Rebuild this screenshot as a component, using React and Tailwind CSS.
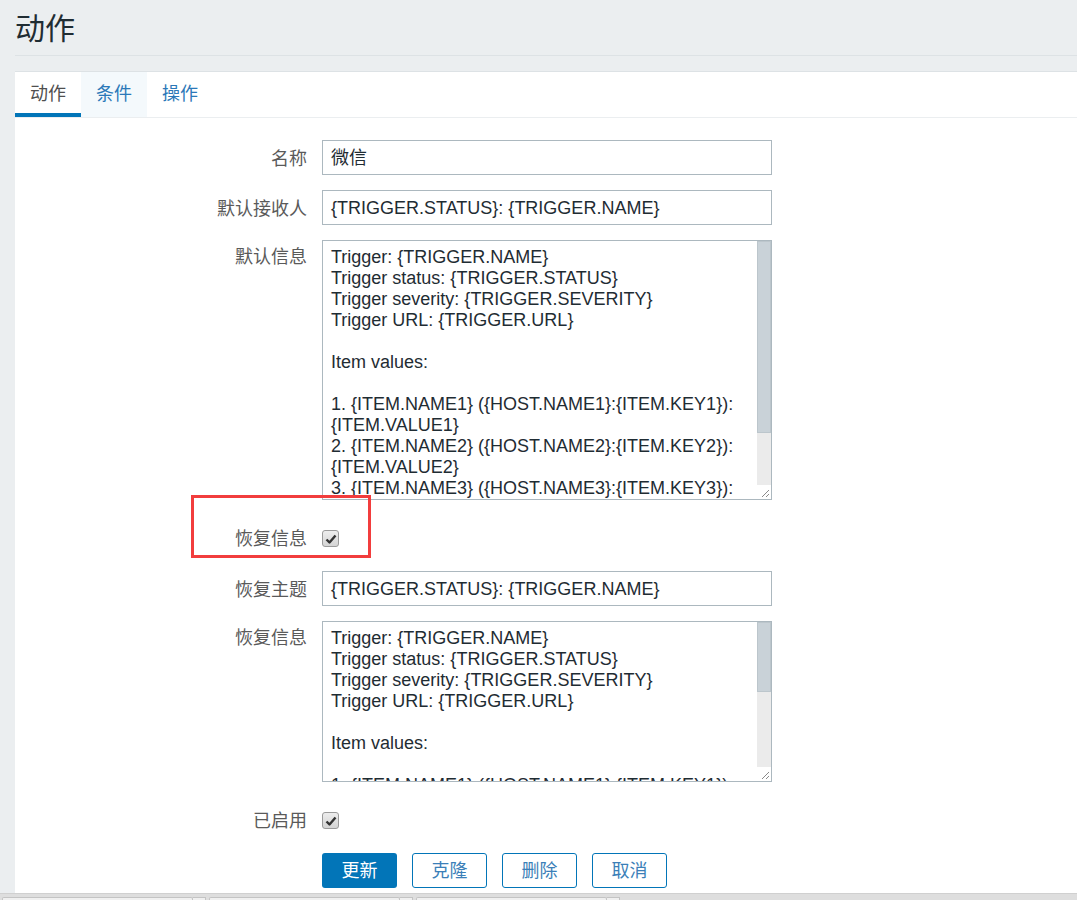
import React from "react";

const font = "font-['Liberation_Sans','Noto_Sans_CJK_SC',sans-serif]";

const msg1 = [
  "Trigger: {TRIGGER.NAME}",
  "Trigger status: {TRIGGER.STATUS}",
  "Trigger severity: {TRIGGER.SEVERITY}",
  "Trigger URL: {TRIGGER.URL}",
  "",
  "Item values:",
  "",
  "1. {ITEM.NAME1} ({HOST.NAME1}:{ITEM.KEY1}):",
  "{ITEM.VALUE1}",
  "2. {ITEM.NAME2} ({HOST.NAME2}:{ITEM.KEY2}):",
  "{ITEM.VALUE2}",
  "3. {ITEM.NAME3} ({HOST.NAME3}:{ITEM.KEY3}):",
];

function Label({ children, top }) {
  return (
    <div
      className={
        "w-[292px] shrink-0 text-right text-[18px] text-[#5a5a5a] " +
        (top ? "pt-[7px] leading-[21px]" : "h-[35px] pt-[3px] leading-[32px]")
      }
    >
      {children}
    </div>
  );
}

function TextInput({ value }) {
  return (
    <div className="ml-[15px] w-[450px] h-[35px] border border-[#acb8bf] bg-white pl-[8px] pt-[1px] text-[18px] leading-[32px] text-[#1f2c33] whitespace-nowrap overflow-hidden">
      {value}
    </div>
  );
}

function Grip() {
  return (
    <svg width="14" height="14" viewBox="0 0 14 14" className="block">
      <path d="M12 5 L5 12 M12 9 L9 12" stroke="#8a8a8a" strokeWidth="1" />
    </svg>
  );
}

function FakeTextarea({ lines, height, thumb }) {
  return (
    <div
      className="ml-[15px] w-[450px] border border-[#acb8bf] bg-white flex"
      style={{ height }}
    >
      <div className="flex-1 overflow-hidden pl-[8px] pt-[6px] text-[18px] leading-[21px] text-[#1f2c33] whitespace-pre">
        {lines.map((l, i) => (
          <div key={i} className="h-[21px]">
            {l}
          </div>
        ))}
      </div>
      <div className="w-[14px] flex flex-col bg-[#ebebeb]">
        <div
          className="bg-[#c9d2d8] border border-[#bcc6cc]"
          style={{ height: thumb }}
        />
        <div className="flex-1" />
        <div className="h-[14px] bg-white">
          <Grip />
        </div>
      </div>
    </div>
  );
}

function Check() {
  return (
    <div className="ml-[15px] mt-[2px] w-[17px] h-[17px] rounded-[3px] border border-[#9a9a9a] bg-[linear-gradient(#ededed,#d4d4d4)] flex items-center justify-center">
      <svg width="12" height="12" viewBox="0 0 12 12">
        <path
          d="M1.5 6.5 L4.5 9.5 L10.5 2.5"
          fill="none"
          stroke="#333"
          strokeWidth="2.4"
          strokeLinejoin="round"
        />
      </svg>
    </div>
  );
}

export default function App() {
  return (
    <div className={"w-[1077px] h-[900px] bg-[#ebeef0] flex flex-col overflow-hidden " + font}>
      <div className="flex-1 pl-[15px] flex flex-col min-h-0">
        <div className="h-[56px] border-b border-[#dde2e5] flex items-center">
          <h1 className="text-[30px] text-[#1f2c33] leading-none pt-[2px]">动作</h1>
        </div>
        <div className="mt-[15px] flex-1 bg-white border-t border-[#dde2e5]">
          <div className="h-[46px] flex border-b border-[#ebeef0] text-[18px]">
            <div className="w-[66px] h-[45px] flex items-center justify-center border-b-4 border-[#0275b8] text-[#4f4f4f] pt-[3px]">
              动作
            </div>
            <div className="w-[66px] h-[45px] flex items-center justify-center bg-[#f4f9fc] text-[#2b78b8]">
              条件
            </div>
            <div className="w-[66px] h-[45px] flex items-center justify-center text-[#2b78b8]">
              操作
            </div>
          </div>

          <div className="pt-[22px] flex flex-col">
            <div className="flex items-center">
              <Label>名称</Label>
              <TextInput value="微信" />
            </div>
            <div className="flex items-center mt-[15px]">
              <Label>默认接收人</Label>
              <TextInput value="{TRIGGER.STATUS}: {TRIGGER.NAME}" />
            </div>
            <div className="flex items-start mt-[15px]">
              <Label top>默认信息</Label>
              <FakeTextarea lines={msg1} height={260} thumb={192} />
            </div>
            <div className="relative flex items-center mt-[20px] h-[35px]">
              <Label>恢复信息</Label>
              <Check />
              <div className="absolute left-[176px] top-[-25px] w-[180px] h-[63px] border-[3px] border-[#f23d3d]" />
            </div>
            <div className="flex items-center mt-[16px]">
              <Label>恢复主题</Label>
              <TextInput value="{TRIGGER.STATUS}: {TRIGGER.NAME}" />
            </div>
            <div className="flex items-start mt-[15px]">
              <Label top>恢复信息</Label>
              <FakeTextarea lines={msg1.slice(0, 8)} height={161} thumb={70} />
            </div>
            <div className="flex items-center mt-[20px] h-[35px]">
              <Label>已启用</Label>
              <Check />
            </div>
            <div className="flex mt-[16px] pl-[307px] gap-[15px] text-[18px]">
              <button className="w-[75px] h-[35px] rounded-[3px] bg-[#0275b8] text-white pt-[2px]">
                更新
              </button>
              <button className="w-[75px] h-[35px] rounded-[3px] border border-[#0275b8] bg-white text-[#3b7fb8] pt-[2px]">
                克隆
              </button>
              <button className="w-[75px] h-[35px] rounded-[3px] border border-[#0275b8] bg-white text-[#3b7fb8] pt-[2px]">
                删除
              </button>
              <button className="w-[75px] h-[35px] rounded-[3px] border border-[#0275b8] bg-white text-[#3b7fb8] pt-[2px]">
                取消
              </button>
            </div>
          </div>
        </div>
      </div>
      <div className="h-[7px] shrink-0 bg-[#dedede] border-t border-[#d0d0d0] flex items-end pl-[2px] gap-[3px]">
        {[0, 1, 2].map((i) => (
          <div key={i} className="flex h-[3px]">
            <div className="w-[191px] border-t border-x border-[#c4c4c4] bg-[#f0f0f0] rounded-t-[2px]" />
            <div className="w-[13px] border-t border-r border-[#c4c4c4] bg-[#f0f0f0]" />
          </div>
        ))}
      </div>
    </div>
  );
}
